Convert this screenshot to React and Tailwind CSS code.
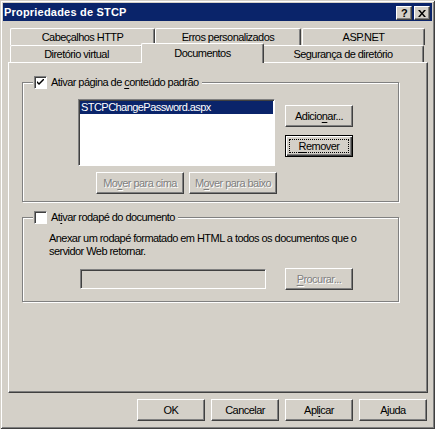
import React from "react";

const raised =
  "border border-t-white border-l-white border-r-[#404040] border-b-[#404040] shadow-[inset_-1px_-1px_#808080]";
const sunken =
  "border border-t-[#808080] border-l-[#808080] border-r-white border-b-white shadow-[inset_1px_1px_#404040]";
const disabledText = "text-[#808080] [text-shadow:1px_1px_0_#fff]";

const U = ({ children }) => (
  <span className="underline decoration-1 underline-offset-[2px]">{children}</span>
);

const Btn = ({ children, w = "w-[68px]", disabled, isDefault }) => {
  if (isDefault) {
    return (
      <div className={`${w} h-[22px] p-[3px] border border-black shadow-[inset_1px_1px_#fff,inset_-1px_-1px_#404040,inset_-2px_-2px_#808080] flex`}>
        <div className="flex-1 border border-dotted border-black flex items-center justify-center">
          {children}
        </div>
      </div>
    );
  }
  return (
    <div className={`${w} h-[22px] ${raised} flex items-center justify-center ${disabled ? disabledText : ""}`}>
      {children}
    </div>
  );
};

const Check = ({ checked }) => (
  <div className={`w-[13px] h-[13px] bg-white ${sunken} flex items-center justify-center`}>
    {checked && (
      <svg width="7" height="7" viewBox="0 0 7 7">
        <path d="M0 2 L0 4 L2 6 L7 1 L7 -1 L2 4 Z" fill="#000" />
      </svg>
    )}
  </div>
);

const BackTab = ({ w, children }) => (
  <div className={`${w} h-[17px] border-t border-l border-r border-t-white border-l-white border-r-[#404040] shadow-[inset_-1px_0_#808080] rounded-t-[2px] flex items-center justify-center`}>
    {children}
  </div>
);

export default function App() {
  return (
    <div className="w-[435px] h-[429px] bg-[#d4d0c8] p-[3px] flex flex-col text-[11px] leading-[13px] text-black font-['Liberation_Sans',Arial,sans-serif] tracking-[-0.55px] shadow-[inset_1px_1px_#d4d0c8,inset_-1px_-1px_#404040,inset_2px_2px_#fff,inset_-2px_-2px_#808080]">
      {/* Title bar */}
      <div className="h-[18px] bg-[#0a246a] flex items-center pl-[1px] pr-[2px]">
        <span className="flex-1 text-white font-bold tracking-[0.2px]">Propriedades de STCP</span>
        <div className="flex gap-[2px] mt-[2px]">
          <div className={`w-[16px] h-[14px] bg-[#d4d0c8] ${raised} flex items-center justify-center font-bold text-[11px] leading-none`}>?</div>
          <div className={`w-[16px] h-[14px] bg-[#d4d0c8] ${raised} flex items-center justify-center`}>
            <svg width="8" height="7" viewBox="0 0 8 7">
              <path d="M0 0h2l2 2.5L6 0h2L5 3.5 8 7H6L4 4.5 2 7H0l3-3.5z" fill="#000" />
            </svg>
          </div>
        </div>
      </div>

      {/* Tabs */}
      <div className="mt-[7px] ml-[7px] flex">
        <BackTab w="w-[145px]">Cabeçalhos HTTP</BackTab>
        <BackTab w="w-[146px]">Erros personalizados</BackTab>
        <div className="w-[1px]" />
        <BackTab w="w-[123px]">ASP.NET</BackTab>
      </div>
      <div className="ml-[7px] flex h-[17px] items-end relative z-10">
        <BackTab w="w-[133px]">Diretório virtual</BackTab>
        <div className="w-[123px] h-[20px] -mx-[2px] relative top-[1px] bg-[#d4d0c8] border-t border-l border-r border-t-white border-l-white border-r-[#404040] shadow-[inset_-1px_0_#808080] rounded-t-[2px] flex items-start justify-center pt-[3px]">
          Documentos
        </div>
        <BackTab w="w-[162px]">Segurança de diretório</BackTab>
      </div>

      {/* Panel */}
      <div className={`ml-[5px] w-[420px] h-[331px] ${raised}`}>
        {/* Group 1 */}
        <div className="relative ml-[13px] mt-[19px] w-[377px] h-[120px] border border-[#808080] shadow-[inset_1px_1px_#fff,1px_1px_#fff] pt-[16px] pl-[55px]">
          <div className="absolute left-[10px] -top-[7px] bg-[#d4d0c8] flex items-center gap-[4px] pl-[1px] pr-[3px]">
            <Check checked />
            <span>
              Ativar página de <U>c</U>onteúdo padrão
            </span>
          </div>
          <div className="flex">
            <div className={`w-[197px] h-[67px] bg-white ${sunken} p-[1px]`}>
              <div className="h-[13px] bg-[#0a246a] text-white pl-[1px]">STCPChangePassword.aspx</div>
            </div>
            <div className="ml-[10px] pt-[6px] flex flex-col gap-[8px]">
              <Btn>
                <span>Adicio<U>n</U>ar...</span>
              </Btn>
              <Btn isDefault>
                <span><U>R</U>emover</span>
              </Btn>
            </div>
          </div>
          <div className="mt-[6px] ml-[18px] flex gap-[5px]">
            <Btn w="w-[88px]" disabled>
              <span>Mo<U>v</U>er para cima</span>
            </Btn>
            <Btn w="w-[88px]" disabled>
              <span>M<U>o</U>ver para baixo</span>
            </Btn>
          </div>
        </div>

        {/* Group 2 */}
        <div className="relative ml-[13px] mt-[15px] w-[377px] h-[85px] border border-[#808080] shadow-[inset_1px_1px_#fff,1px_1px_#fff]">
          <div className="absolute left-[10px] -top-[7px] bg-[#d4d0c8] flex items-center gap-[4px] pl-[1px] pr-[3px]">
            <Check />
            <span>
              At<U>i</U>var rodapé do documento
            </span>
          </div>
          <div className="pt-[14px] pl-[26px]">
            Anexar um rodapé formatado em HTML a todos os documentos que o
            <br />
            servidor Web retornar.
          </div>
          <div className="mt-[10px] pl-[57px] flex items-center gap-[19px]">
            <div className={`w-[186px] h-[20px] ${sunken}`} />
            <Btn disabled>
              <span><U>P</U>rocurar...</span>
            </Btn>
          </div>
        </div>
      </div>

      {/* Bottom buttons */}
      <div className="mt-[6px] mr-[5px] flex justify-end gap-[6px]">
        <Btn>OK</Btn>
        <Btn>Cancelar</Btn>
        <Btn>
          <span>Apl<U>i</U>car</span>
        </Btn>
        <Btn>Ajuda</Btn>
      </div>
    </div>
  );
}
